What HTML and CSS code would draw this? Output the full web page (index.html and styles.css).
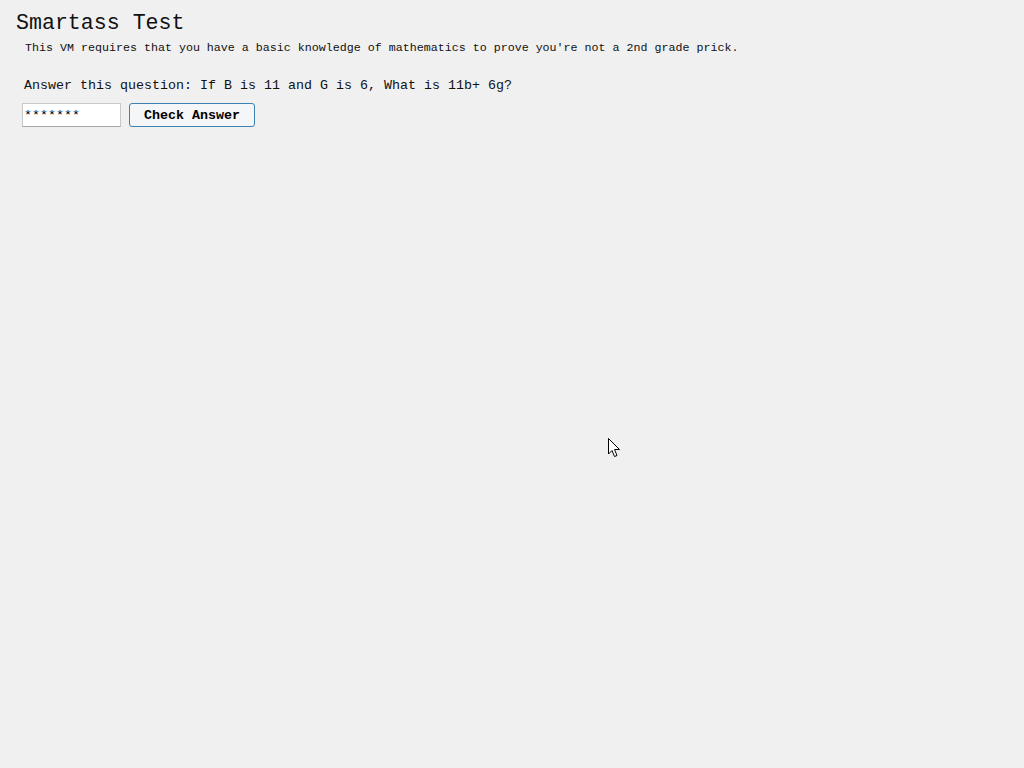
FILE: index.html
```html
<!DOCTYPE html>
<html lang="en">
<head>
    <meta charset="UTF-8">
    <title>Smartass Test</title>
    <link rel="stylesheet" href="styles.css">
</head>
<body>
    <h1 class="title">Smartass Test</h1>
    <p class="intro">This VM requires that you have a basic knowledge of mathematics to prove you're not a 2nd grade prick.</p>

    <form class="quiz" onsubmit="return false">
        <p class="question">Answer this question: If B is 11 and G is 6, What is 11b+ 6g?</p>
        <div class="row">
            <input class="answer" type="text" value="*******">
            <button class="check-btn" type="submit">Check Answer</button>
        </div>
    </form>

    <!-- ponteiro do mouse -->
    <svg class="cursor" width="13" height="20" viewBox="0 0 13 20">
        <path d="M0.5 0.5 L0.5 16 L4 12.5 L6.5 18.5 L9 17.5 L6.5 11.5 L11.5 11.5 Z" fill="#fff" stroke="#000" stroke-width="1"/>
    </svg>
</body>
</html>
```

FILE: styles.css
```css
body {
    margin: 0;
    padding: 0;
    background-color: #f0f0f0;
    color: #111;
    font-family: 'Liberation Mono', 'Courier New', monospace;
}

.title {
    margin: 0;
    padding: 10px 0 0 16px;
    font-size: 21.6px;
    font-weight: normal;
    line-height: 26px;
}

.intro {
    margin: 5px 0 0 25px;
    font-size: 11.67px;
    line-height: 14px;
}

.quiz {
    margin: 0 0 0 24px;
}

.question {
    margin: 23px 0 0 0;
    font-size: 13.33px;
    line-height: 16px;
}

.row {
    display: flex;
    align-items: center;
    gap: 8px;
    margin-top: 9px;
    margin-left: -2px;
}

.answer {
    box-sizing: border-box;
    width: 99px;
    height: 24px;
    padding: 0 1px;
    border: 1px solid #c8c8c8;
    border-bottom-color: #a8a8a8;
    background-color: #fff;
    font-family: 'Liberation Mono', 'Courier New', monospace;
    font-size: 13.33px;
    color: #000;
}

.check-btn {
    box-sizing: border-box;
    width: 126px;
    height: 24px;
    padding: 0 12px;
    border: 1px solid #3c7fb1;
    border-radius: 3px;
    background-color: #f4f6f8;
    font-family: 'Liberation Mono', 'Courier New', monospace;
    font-size: 13.33px;
    font-weight: bold;
    color: #000;
    cursor: pointer;
}

.cursor {
    position: absolute;
    left: 608px;
    top: 438px;
}
```
